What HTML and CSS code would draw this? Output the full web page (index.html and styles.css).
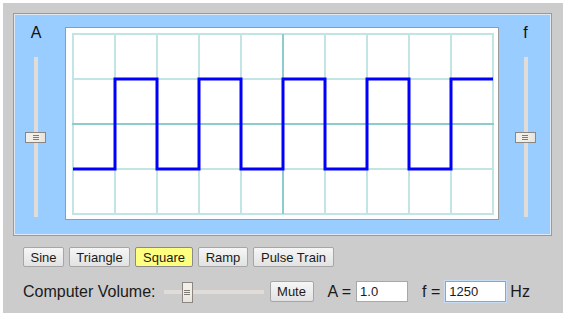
FILE: index.html
```html
<!DOCTYPE html>
<html lang="en">
<head>
    <meta charset="UTF-8">
    <title>Signal Generator</title>
    <link rel="stylesheet" href="styles.css">
</head>
<body>
    <div class="app">
        <div class="panel">
            <div class="side side-left">
                <div class="side-label">A</div>
                <div class="vslider">
                    <div class="thumb-v"><span class="grip"></span></div>
                </div>
            </div>

            <div class="scope">
                <svg width="432" height="191" viewBox="0 0 432 191">
                    <g stroke="#c2e4e4" stroke-width="2">
                        <line x1="7" y1="6" x2="7" y2="186" />
                        <line x1="49" y1="6" x2="49" y2="186" />
                        <line x1="91" y1="6" x2="91" y2="186" />
                        <line x1="133" y1="6" x2="133" y2="186" />
                        <line x1="175" y1="6" x2="175" y2="186" />
                        <line x1="259" y1="6" x2="259" y2="186" />
                        <line x1="301" y1="6" x2="301" y2="186" />
                        <line x1="343" y1="6" x2="343" y2="186" />
                        <line x1="385" y1="6" x2="385" y2="186" />
                        <line x1="427" y1="6" x2="427" y2="186" />
                        <line x1="6" y1="6" x2="428" y2="6" />
                        <line x1="6" y1="51" x2="428" y2="51" />
                        <line x1="6" y1="141" x2="428" y2="141" />
                        <line x1="6" y1="186" x2="428" y2="186" />
                    </g>
                    <g stroke="#8ccccc" stroke-width="2">
                        <line x1="217" y1="6" x2="217" y2="186" />
                        <line x1="6" y1="96" x2="428" y2="96" />
                    </g>
                    <path d="M7 141 H49 V51 H91 V141 H133 V51 H175 V141 H217 V51 H259 V141 H301 V51 H343 V141 H385 V51 H427"
                          fill="none" stroke="#0000ff" stroke-width="3" />
                </svg>
            </div>

            <div class="side side-right">
                <div class="side-label">f</div>
                <div class="vslider">
                    <div class="thumb-v"><span class="grip"></span></div>
                </div>
            </div>
        </div>

        <div class="waves">
            <button class="btn w-sine">Sine</button>
            <button class="btn w-triangle">Triangle</button>
            <button class="btn w-square active">Square</button>
            <button class="btn w-ramp">Ramp</button>
            <button class="btn w-pulse">Pulse Train</button>
        </div>

        <div class="controls">
            <span class="label">Computer Volume:</span>
            <div class="hslider">
                <div class="thumb-h"><span class="grip"></span></div>
            </div>
            <button class="btn mute">Mute</button>
            <span class="label eq-a">A =</span>
            <input type="text" class="field amp" value="1.0">
            <span class="label eq-f">f =</span>
            <input type="text" class="field freq focused" value="1250">
            <span class="label unit">Hz</span>
        </div>
    </div>
</body>
</html>
```

FILE: styles.css
```css
body {
  margin: 0;
  background: #fff;
  font-family: 'Liberation Sans', Arial, sans-serif;
  color: #222;
}

.app {
  box-sizing: border-box;
  margin: 3px;
  width: 560px;
  height: 310px;
  padding: 10px;
  background-color: #cccccc;
}

.panel {
  box-sizing: border-box;
  display: flex;
  width: 539px;
  height: 223px;
  background-color: #99ccff;
  border: 1px solid #9a9a9a;
  box-shadow: inset 0 0 0 1px #dfe8f0;
}

.side {
  box-sizing: border-box;
  display: flex;
  flex-direction: column;
  align-items: center;
  padding-top: 10px;
}

.side-left {
  width: 51px;
  padding-right: 7px;
}

.side-right {
  width: 52px;
  padding-left: 1px;
}

.side-label {
  font-size: 16px;
  line-height: 18px;
  color: #111;
}

.vslider {
  position: relative;
  margin-top: 15px;
  width: 4px;
  height: 160px;
  background-color: #e2dcd8;
}

.thumb-v {
  position: absolute;
  left: -9px;
  top: 75px;
  box-sizing: border-box;
  width: 21px;
  height: 11px;
  background: linear-gradient(90deg, #f2eee8 55%, #e6e2dc);
  border: 1px solid #8c8682;
  display: flex;
  justify-content: center;
  align-items: center;
}

.grip {
  display: block;
  width: 6px;
  height: 5px;
  background: repeating-linear-gradient(#807a76 0 1px, transparent 1px 2px);
}

.scope {
  margin-top: 13px;
  width: 432px;
  height: 191px;
  background: #fff;
  border: 1px solid #9a9a9a;
}

.scope svg {
  display: block;
}

.waves {
  display: flex;
  gap: 5px;
  margin: 11px 0 0 10px;
}

.btn {
  box-sizing: border-box;
  height: 20px;
  padding: 0;
  font-family: 'Liberation Sans', Arial, sans-serif;
  font-size: 13px;
  color: #1a1a1a;
  background: linear-gradient(#f6f6f6, #e2e2e2);
  border: 1px solid #a6a6a6;
  border-radius: 2px;
}

.btn.active {
  background: #ffff80;
  border-color: #8a8a8a;
}

.w-sine { width: 41px; }
.w-triangle { width: 61px; }
.w-square { width: 58px; }
.w-ramp { width: 50px; }
.w-pulse { width: 81px; }

.controls {
  display: flex;
  align-items: center;
  height: 21px;
  margin: 14px 0 0 10px;
}

.label {
  font-size: 16px;
  color: #1a1a1a;
}

.hslider {
  position: relative;
  margin-left: 8px;
  width: 100px;
  height: 4px;
  background-color: #e2dcd8;
}

.thumb-h {
  position: absolute;
  left: 18px;
  top: -8px;
  box-sizing: border-box;
  width: 11px;
  height: 21px;
  background: linear-gradient(#f2eee8 55%, #e6e2dc);
  border: 1px solid #8c8682;
  display: flex;
  justify-content: center;
  align-items: center;
}

.mute {
  margin-left: 6px;
  width: 44px;
  height: 21px;
}

.eq-a {
  margin-left: 14px;
  margin-right: 5px;
}

.eq-f {
  margin-left: 14px;
  margin-right: 5px;
}

.field {
  box-sizing: border-box;
  height: 21px;
  padding: 0 3px;
  font-family: 'Liberation Sans', Arial, sans-serif;
  font-size: 13px;
  color: #1a1a1a;
  background: #fff;
  border: 1px solid #a8a8a8;
  outline: none;
}

.amp { width: 52px; }
.freq { width: 61px; }

.field.focused {
  border-color: #7aa8e0;
  box-shadow: 0 0 0 1px #c8dcf4;
}

.unit {
  margin-left: 4px;
}
```
